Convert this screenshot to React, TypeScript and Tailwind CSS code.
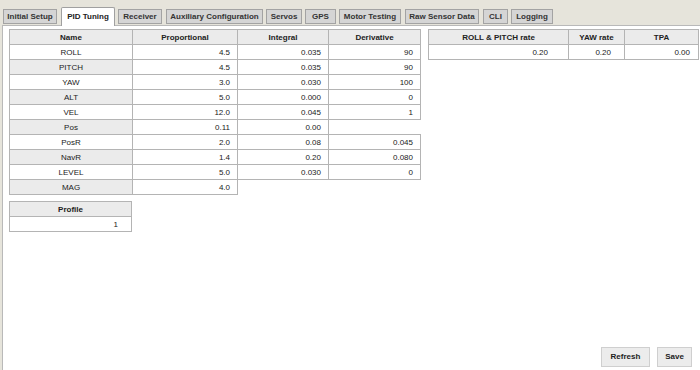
import React from "react";

const tabs: { label: string; w: number; ml: string; active?: boolean }[] = [
  { label: "Initial Setup", w: 54, ml: "ml-[3px]" },
  { label: "PID Tuning", w: 54, ml: "ml-[4px]", active: true },
  { label: "Receiver", w: 44, ml: "ml-[3px]" },
  { label: "Auxiliary Configuration", w: 97, ml: "ml-[4px]" },
  { label: "Servos", w: 36, ml: "ml-[3px]" },
  { label: "GPS", w: 31, ml: "ml-[3px]" },
  { label: "Motor Testing", w: 62, ml: "ml-[3px]" },
  { label: "Raw Sensor Data", w: 74, ml: "ml-[4px]" },
  { label: "CLI", w: 25, ml: "ml-[4px]" },
  { label: "Logging", w: 42, ml: "ml-[3px]" },
];

const pid: [string, string, string | null, string | null][] = [
  ["ROLL", "4.5", "0.035", "90"],
  ["PITCH", "4.5", "0.035", "90"],
  ["YAW", "3.0", "0.030", "100"],
  ["ALT", "5.0", "0.000", "0"],
  ["VEL", "12.0", "0.045", "1"],
  ["Pos", "0.11", "0.00", null],
  ["PosR", "2.0", "0.08", "0.045"],
  ["NavR", "1.4", "0.20", "0.080"],
  ["LEVEL", "5.0", "0.030", "0"],
  ["MAG", "4.0", null, null],
];

const th = "h-[15px] border border-[#b4b4b4] bg-[#ebebeb] text-center font-bold p-0 leading-[13px]";
const td = "h-[15px] border border-[#b4b4b4] text-right pr-[7px] p-0 leading-[13px]";

export default function App() {
  return (
    <div
      className="w-[700px] h-[370px] bg-[#e6e4db] flex flex-col overflow-hidden text-[8px] text-[#222]"
      style={{ fontFamily: '"Liberation Sans", Arial, sans-serif' }}
    >
      <div className="flex items-end h-[25px] pl-[0px] shrink-0">
        {tabs.map((t) =>
          t.active ? (
            <div
              key={t.label}
              className={`${t.ml} h-[19px] mb-[-1px] bg-white border border-b-0 border-[#a0a0a0] rounded-t-[2px] flex items-center justify-center font-bold relative z-10`}
              style={{ width: t.w }}
            >
              {t.label}
            </div>
          ) : (
            <div
              key={t.label}
              className={`${t.ml} h-[15px] mb-[1px] bg-[#d5d5d5] border border-[#a3a3a3] flex items-center justify-center font-bold text-[#333]`}
              style={{ width: t.w }}
            >
              {t.label}
            </div>
          )
        )}
      </div>
      <div className="flex-1 ml-[2px] bg-white border-l border-t border-[#b9b9b9] flex flex-col pl-[6px] pt-[3px] pr-[2px] pb-[2px]">
        <div className="flex items-start">
          <div className="flex flex-col">
            <table className="border-collapse w-[411px] table-fixed">
              <colgroup>
                <col className="w-[123px]" />
                <col className="w-[105px]" />
                <col className="w-[91px]" />
                <col className="w-[92px]" />
              </colgroup>
              <thead>
                <tr>
                  <th className={th}>Name</th>
                  <th className={th}>Proportional</th>
                  <th className={th}>Integral</th>
                  <th className={th}>Derivative</th>
                </tr>
              </thead>
              <tbody>
                {pid.map((r, i) => (
                  <tr key={r[0]}>
                    <td
                      className={`h-[15px] border border-[#b4b4b4] text-center p-0 leading-[13px] ${
                        i % 2 === 1 ? "bg-[#ebebeb]" : "bg-white"
                      }`}
                    >
                      {r[0]}
                    </td>
                    <td className={td}>{r[1]}</td>
                    {r[2] !== null ? <td className={td}>{r[2]}</td> : <td className="p-0" />}
                    {r[3] !== null ? <td className={td}>{r[3]}</td> : <td className="p-0" />}
                  </tr>
                ))}
              </tbody>
            </table>
            <table className="border-collapse w-[123px] table-fixed mt-[6px]">
              <thead>
                <tr>
                  <th className={th}>Profile</th>
                </tr>
              </thead>
              <tbody>
                <tr>
                  <td className={`${td} h-[13px] pr-[13px]`}>1</td>
                </tr>
              </tbody>
            </table>
          </div>
          <table className="border-collapse w-[270px] table-fixed ml-[7px]">
            <colgroup>
              <col className="w-[140px]" />
              <col className="w-[56px]" />
              <col className="w-[74px]" />
            </colgroup>
            <thead>
              <tr>
                <th className={th}>ROLL &amp; PITCH rate</th>
                <th className={th}>YAW rate</th>
                <th className={th}>TPA</th>
              </tr>
            </thead>
            <tbody>
              <tr>
                <td className={`${td} pr-[20px]`}>0.20</td>
                <td className={`${td} pr-[13px]`}>0.20</td>
                <td className={`${td} pr-[8px]`}>0.00</td>
              </tr>
            </tbody>
          </table>
        </div>
        <div className="flex-1" />
        <div className="flex justify-end gap-[7px] pr-[6px] pb-[1px]">
          <button className="w-[49px] h-[20px] bg-[#ececec] border border-[#cfcfcf] font-bold text-[8px] text-[#222]">
            Refresh
          </button>
          <button className="w-[35px] h-[20px] bg-[#ececec] border border-[#cfcfcf] font-bold text-[8px] text-[#222]">
            Save
          </button>
        </div>
      </div>
    </div>
  );
}
